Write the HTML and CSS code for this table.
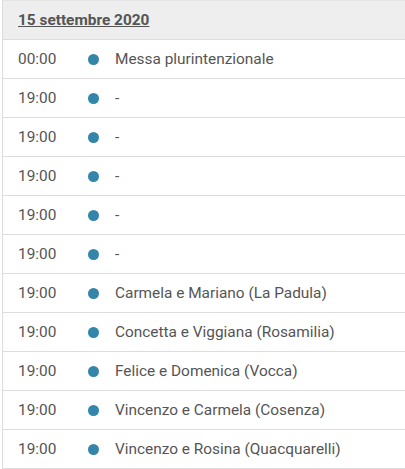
FILE: index.html
```html
<!DOCTYPE html>
<html>
<head>
<meta charset="utf-8">
<link rel="stylesheet" href="styles.css">
</head>
<body>
<div class="list">
  <div class="head"><a class="date">15 settembre 2020</a></div>
  <div class="row"><span class="time">00:00</span><span class="dot"></span><span class="name">Messa plurintenzionale</span></div>
  <div class="row"><span class="time">19:00</span><span class="dot"></span><span class="name">-</span></div>
  <div class="row"><span class="time">19:00</span><span class="dot"></span><span class="name">-</span></div>
  <div class="row"><span class="time">19:00</span><span class="dot"></span><span class="name">-</span></div>
  <div class="row"><span class="time">19:00</span><span class="dot"></span><span class="name">-</span></div>
  <div class="row"><span class="time">19:00</span><span class="dot"></span><span class="name">-</span></div>
  <div class="row"><span class="time">19:00</span><span class="dot"></span><span class="name">Carmela e Mariano (La Padula)</span></div>
  <div class="row"><span class="time">19:00</span><span class="dot"></span><span class="name">Concetta e Viggiana (Rosamilia)</span></div>
  <div class="row"><span class="time">19:00</span><span class="dot"></span><span class="name">Felice e Domenica (Vocca)</span></div>
  <div class="row"><span class="time">19:00</span><span class="dot"></span><span class="name">Vincenzo e Carmela (Cosenza)</span></div>
  <div class="row"><span class="time">19:00</span><span class="dot"></span><span class="name">Vincenzo e Rosina (Quacquarelli)</span></div>
</div>
</body>
</html>
```
FILE: styles.css
```css
html, body { margin: 0; padding: 0; background: #fff; }
body { font-family: Roboto, "Noto Sans", sans-serif; color: #555; }
.list {
  margin-left: 2px;
  width: 420px;
  border-left: 1px solid #ddd;
  border-top: 1px solid #e4e4e4;
}
.head {
  height: 38px;
  background: #eee;
  border-bottom: 1px solid #ddd;
  display: flex;
  align-items: center;
  padding-left: 15px;
}
.date {
  font-size: 15.4px;
  font-weight: 700;
  color: #555;
  text-decoration: underline;
}
.row {
  height: 38px;
  border-bottom: 1px solid #ddd;
  display: flex;
  align-items: center;
  padding-left: 15px;
  font-size: 15.4px;
}
.time { width: 70px; }
.dot {
  width: 11px;
  height: 11px;
  border-radius: 50%;
  background: #3385aa;
  margin-right: 16px;
}
```
